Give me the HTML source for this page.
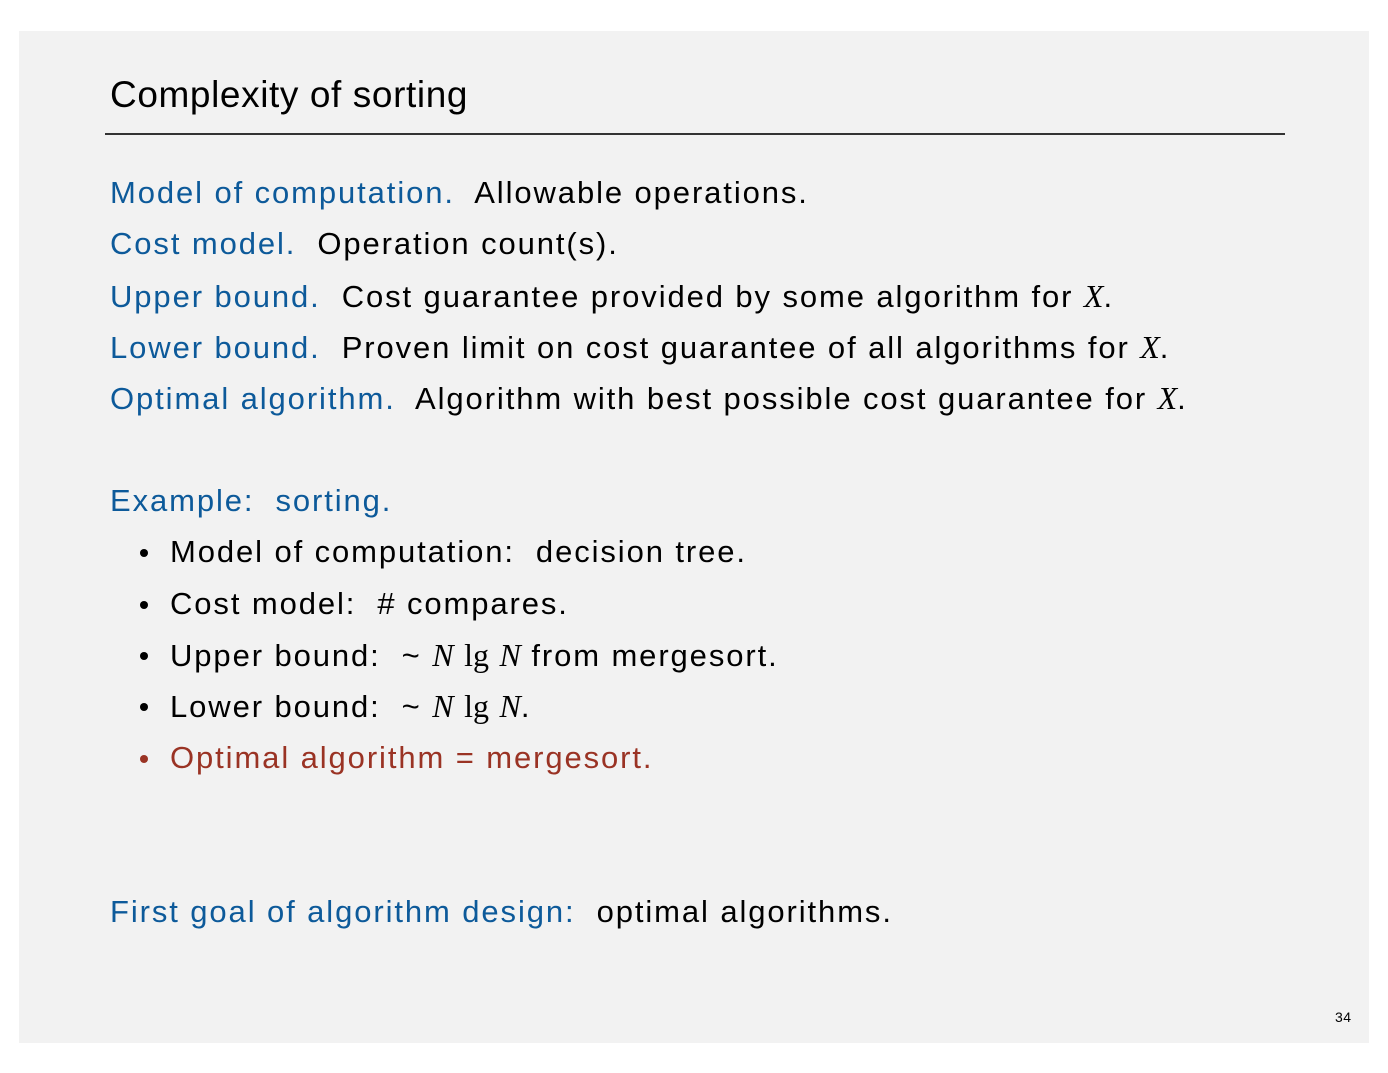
<!DOCTYPE html>
<html><head><style>
body{margin:0;background:#fff;width:1388px;height:1073px;position:relative;font-family:"Liberation Sans",sans-serif;}
.slide{position:absolute;left:19px;top:31px;width:1350px;height:1012px;background:#f2f2f2;}
.t{position:absolute;left:110px;font-size:31px;color:#000;white-space:pre;line-height:1;letter-spacing:1.9px}
.b{color:#0d5a9a}
.r{color:#9a3324}
.m{font-family:"Liberation Serif",serif;font-style:italic;font-size:32px;letter-spacing:0}
.n{font-family:"Liberation Serif",serif;font-size:32px;letter-spacing:0}
.dot{position:absolute;left:140px;width:8px;height:8px;border-radius:50%;background:#000}
</style></head><body>
<div class="slide"></div>
<div class="t" style="top:76px;font-size:37px;letter-spacing:0.6px">Complexity of sorting</div>
<div style="position:absolute;left:105px;top:133px;width:1180px;height:1.5px;background:#333"></div>
<div class="t" style="top:177px"><span class="b">Model of computation.</span>  Allowable operations.</div>
<div class="t" style="top:228px"><span class="b">Cost model.</span>  Operation count(s).</div>
<div class="t" style="top:280px"><span class="b">Upper bound.</span>  Cost guarantee provided by some algorithm for <span class="m">X</span>.</div>
<div class="t" style="top:331px"><span class="b">Lower bound.</span>  Proven limit on cost guarantee of all algorithms for <span class="m">X</span>.</div>
<div class="t" style="top:382px"><span class="b">Optimal algorithm.</span>  Algorithm with best possible cost guarantee for <span class="m">X</span>.</div>
<div class="t b" style="top:485px">Example:  sorting.</div>
<div class="dot" style="top:549px"></div><div class="t" style="left:170px;top:536px">Model of computation:  decision tree.</div>
<div class="dot" style="top:601px"></div><div class="t" style="left:170px;top:588px">Cost model:  # compares.</div>
<div class="dot" style="top:652px"></div><div class="t" style="left:170px;top:639px">Upper bound:  ~ <span class="m">N</span> <span class="n">lg</span> <span class="m">N</span> from mergesort.</div>
<div class="dot" style="top:703px"></div><div class="t" style="left:170px;top:690px">Lower bound:  ~ <span class="m">N</span> <span class="n">lg</span> <span class="m">N</span>.</div>
<div class="dot" style="top:755px;background:#9a3324"></div><div class="t r" style="left:170px;top:742px">Optimal algorithm = mergesort.</div>
<div class="t" style="top:896px"><span class="b">First goal of algorithm design:</span>  optimal algorithms.</div>
<div class="t" style="left:1335px;top:1010px;font-size:14px;letter-spacing:0.5px">34</div>
</body></html>
